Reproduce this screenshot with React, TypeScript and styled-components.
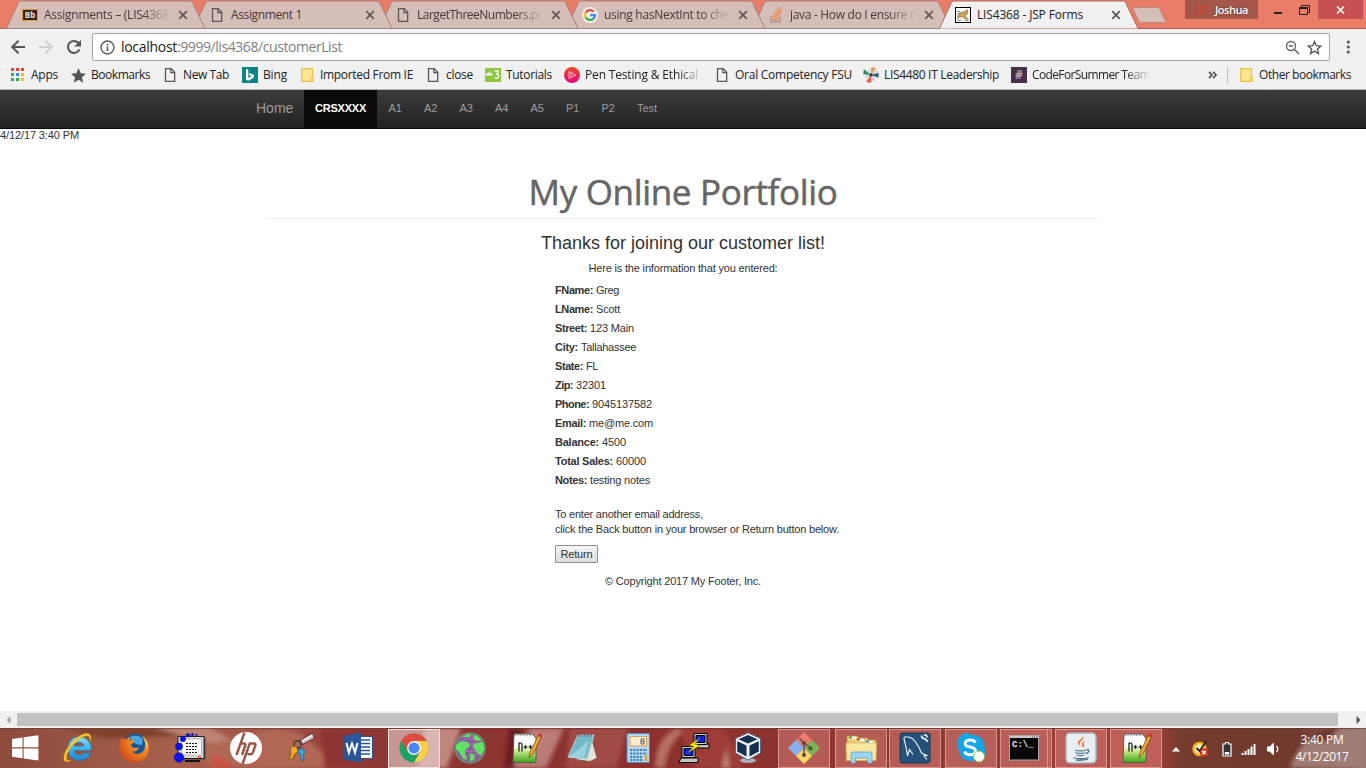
import React, { useLayoutEffect, useRef, useState } from "react";
import styled, { createGlobalStyle } from "styled-components";

const GlobalStyle = createGlobalStyle`
  * { box-sizing: border-box; }
  body { margin: 0; background: #fff; overflow: hidden; }
  svg { display: block; flex: none; }
`;

const UI_FONT = `"Open Sans", "Noto Sans", sans-serif`;
const PAGE_FONT = `"Liberation Sans", Arial, sans-serif`;

/* Text whose tracking is adjusted so that it takes a given width. */
const FitSpan = styled.span`
  display: inline-block;
  white-space: pre;
`;

function Fit({ width, children }: { width: number; children: string }) {
  const ref = useRef<HTMLSpanElement>(null);
  const [spacing, setSpacing] = useState(0);
  useLayoutEffect(() => {
    if (ref.current) {
      const natural = ref.current.getBoundingClientRect().width;
      setSpacing((width - natural) / children.length);
    }
  }, [width, children]);
  return (
    <FitSpan ref={ref} style={{ letterSpacing: spacing }}>
      {children}
    </FitSpan>
  );
}

const Screen = styled.div`
  width: 1366px;
  height: 768px;
  display: flex;
  flex-direction: column;
  overflow: hidden;
  background: #fff;
`;

/* ---------- tab strip ---------- */

const TabStrip = styled.div`
  display: flex;
  position: relative;
  height: 29px;
  flex: none;
  padding-left: 6px;
  background: #e97d67;
  border-bottom: 1px solid #a5605a;
`;

const Tab = styled.div<{ $width: number; $layer: number; $active?: boolean }>`
  position: relative;
  z-index: ${(p) => p.$layer};
  width: ${(p) => p.$width}px;
  flex: none;
  height: 29px;
  display: flex;
  align-items: center;
  padding: 1px 0 0 16px;
  font: 12px ${UI_FONT};
  color: ${(p) => (p.$active ? "#222" : "#4a3638")};
`;

const TabShape = styled.svg`
  position: absolute;
  left: 0;
  top: 0;
`;

const TabIcon = styled.div`
  position: relative;
  width: 16px;
  height: 16px;
  margin-right: 6px;
  display: flex;
  justify-content: center;
  align-items: center;
`;

const TabTitle = styled.div<{ $fade?: boolean }>`
  position: relative;
  width: 125px;
  overflow: hidden;
  line-height: 18px;
  ${(p) => p.$fade && "mask-image: linear-gradient(90deg, #000 98px, transparent 126px);"}
`;

const TabClose = styled.div`
  position: relative;
  margin-left: 9px;
`;

const NewTab = styled.div`
  width: 37px;
  margin-left: 7px;
  padding-top: 6px;
`;

const WindowControls = styled.div`
  display: flex;
  margin-left: auto;
  align-items: flex-start;
  padding-right: 3px;
`;

const UserBadge = styled.div`
  width: 73px;
  height: 19px;
  background: #a55849;
  display: flex;
  align-items: center;
  gap: 8px;
  padding-left: 9px;
  color: #fff;
  font: 600 11px/18px ${UI_FONT};
  text-shadow: 0 0 2px #402420;
`;

const WindowButton = styled.div<{ $width: number; $close?: boolean }>`
  width: ${(p) => p.$width}px;
  height: 19px;
  display: flex;
  align-items: center;
  justify-content: center;
  background: ${(p) => (p.$close ? "#c75050" : "transparent")};
`;

const CloseCross = ({ color }: { color: string }) => (
  <svg width="10" height="10" viewBox="0 0 10 10">
    <path d="M1.2 1.2 8.8 8.8M8.8 1.2 1.2 8.8" stroke={color} strokeWidth="1.7" />
  </svg>
);

const PageIcon = () => (
  <svg width="12" height="14" viewBox="0 0 12 14">
    <path d="M1.500.700h5.700l3.500 3.600v9H1.500z" fill="none" stroke="#5d5456" strokeWidth="1.3" />
    <path d="M6.800.900v3.700h3.800" fill="none" stroke="#5d5456" strokeWidth="1.2" />
  </svg>
);

const SmallLabel = styled.div<{ $bg: string; $color: string; $border?: string; $size: number; $height: number }>`
  width: 16px;
  height: ${(p) => p.$height}px;
  background: ${(p) => p.$bg};
  color: ${(p) => p.$color};
  border: ${(p) => (p.$border ? `1px solid ${p.$border}` : "none")};
  font: bold ${(p) => p.$size}px/1 ${UI_FONT};
  display: flex;
  align-items: center;
  justify-content: center;
`;

const GoogleIcon = () => (
  <svg width="16" height="16" viewBox="0 0 16 16">
    <circle cx="8" cy="8" r="8" fill="#f6eded" />
    <g fill="none" strokeWidth="2.2">
      <path d="M11.6 4.6A5 5 0 0 0 3.6 5.7" stroke="#ea4335" />
      <path d="M3.7 5.5a5 5 0 0 0 0 5" stroke="#fbbc05" />
      <path d="M3.6 10.3a5 5 0 0 0 7.6 1.5" stroke="#34a853" />
      <path d="M11.1 11.9A5 5 0 0 0 13 8.1H8.2" stroke="#4285f4" />
    </g>
  </svg>
);

const StackIcon = () => (
  <svg width="14" height="16" viewBox="0 0 14 16">
    <path d="M1.6 9.5v5h9.6v-5" fill="none" stroke="#a8938d" strokeWidth="1.3" />
    <path d="M3.3 12.4h6.2M3.4 9.7l6.2.9M4 6.9l5.8 2M5.6 4.1l4.9 3.8M8 1.6l3.5 5.2M11.2.4l.9 5.6" stroke="#ee8748" strokeWidth="1.2" />
  </svg>
);

const TomcatIcon = () => (
  <svg width="16" height="16" viewBox="0 0 16 16">
    <rect x=".5" y=".5" width="15" height="15" fill="#fff" stroke="#000" />
    <path d="M8.500 4l.9.9L11 3.500l1.300-.9.700 2.400-.8 2.200-2 .900.8 2 2.600 1.900-3.600-.5-2.300-1.600-2.700.200-2.600 1.500 1-1.700-1.200-.8 1.600-.8L6 6l1.500-.8z" fill="#d0a24c" stroke="#6b5630" strokeWidth=".5" />
    <path d="M2 4.500c2-.8 2.800.2 3.600 1.200M2.500 7l2.500-.6M2.500 13.200h3.500M9.500 13l4 .6" fill="none" stroke="#444" strokeWidth=".8" />
  </svg>
);

const tabs = [
  { title: "Assignments – (LIS4368", w: 125, fade: true, icon: <SmallLabel $bg="#33231f" $color="#f1e3cf" $border="#dd9c3a" $size={8} $height={12}>Bb</SmallLabel> },
  { title: "Assignment 1", w: 71, icon: <PageIcon /> },
  { title: "LargetThreeNumbers.pr", w: 125, fade: true, icon: <PageIcon /> },
  { title: "using hasNextInt to che", w: 125, fade: true, icon: <GoogleIcon /> },
  { title: "java - How do I ensure t", w: 124, fade: true, icon: <StackIcon /> },
  { title: "LIS4368 - JSP Forms", w: 106, active: true, icon: <TomcatIcon /> },
];

/* ---------- toolbar ---------- */

const Toolbar = styled.div`
  display: flex;
  height: 36px;
  flex: none;
  background: #f1f1f1;
  padding: 4px 12px 4px 10px;
  align-items: center;
`;

const NavIcons = styled.div`
  width: 82px;
  display: flex;
  gap: 12px;
`;

const Omnibox = styled.div`
  display: flex;
  flex: 1;
  height: 28px;
  margin-right: 11px;
  border: 1px solid #a6a6a6;
  border-radius: 2px;
  background: #fff;
  align-items: center;
  padding: 0 7px 0 7px;
  font: 14px/20px ${UI_FONT};
  color: #808080;
`;

const Url = styled.div`
  margin: 0 auto 1px 6px;
  display: flex;
`;

const Host = styled.span`
  color: #222;
`;

const OmniIcons = styled.div`
  display: flex;
  gap: 7px;
`;

/* ---------- bookmarks ---------- */

const BookmarksBar = styled.div`
  display: flex;
  height: 25px;
  flex: none;
  background: #f1f1f1;
  border-bottom: 1px solid #b6b4b6;
  padding: 0 15px 4px 10px;
  align-items: center;
  font: 12px/18px ${UI_FONT};
  color: #222;
`;

const Bookmark = styled.div<{ $width: number }>`
  width: ${(p) => p.$width}px;
  display: flex;
  align-items: center;
  flex: none;
`;

const BookmarkIcon = styled.div`
  width: 16px;
  height: 16px;
  margin-right: 5px;
  flex: none;
  display: flex;
  align-items: center;
  justify-content: center;
`;

const BookmarkText = styled.div<{ $fade?: boolean }>`
  overflow: hidden;
  width: ${(p) => (p.$fade ? "118px" : "auto")};
  ${(p) => p.$fade && "mask-image: linear-gradient(90deg, #000 92px, transparent 119px);"}
`;

const Overflow = styled.div`
  margin-left: auto;
  width: 19px;
  display: flex;
`;

const Divider = styled.div`
  width: 1px;
  height: 16px;
  background: #bcbcbc;
  margin-right: 10px;
`;

const FolderIcon = () => (
  <svg width="13" height="14" viewBox="0 0 13 14">
    <path d="M.7.7h10.8v9h.8v3.6H.7z" fill="#ffe58f" stroke="#e6c24c" strokeWidth="1.2" />
    <path d="M10.2 13V9.8h1.6" fill="none" stroke="#e6c24c" />
  </svg>
);

const AppsIcon = () => (
  <svg width="14" height="14" viewBox="0 0 14 14">
    {["#ea4335", "#ea4335", "#ea4335", "#34a853", "#4285f4", "#fbbc05", "#34a853", "#34a853", "#fbbc05"].map((c, i) => (
      <rect key={i} x={(i % 3) * 5} y={Math.floor(i / 3) * 5} width="3" height="3" fill={c} />
    ))}
  </svg>
);

const StarIcon = () => (
  <svg width="15" height="15" viewBox="0 0 24 24">
    <path d="M12 0l3.5 8.2 8.5.8-6.5 5.8 2 8.7L12 18.8l-7.5 4.7 2-8.7L0 9l8.5-.8z" fill="#555" />
  </svg>
);

const BingIcon = () => (
  <svg width="16" height="16" viewBox="0 0 16 16">
    <rect width="16" height="16" fill="#0c8484" />
    <path d="M4 2l2.3.8v8.1l3.1-1.8-1.6-.7-1-2.4 5.2 1.8v2.6l-5.7 3.4L4 12.4z" fill="#fff" />
  </svg>
);

const W3Icon = () => (
  <svg width="16" height="14" viewBox="0 0 16 14">
    <rect width="16" height="14" fill="#8dc63f" />
    <path d="M1 5.500q.7 3 2.200 0 .8 3 2 0 .8 3 2.200.3M9.500 3.200q4-1.400 3.700 1-.3 1.600-2.200 2 3 0 2.700 2.200-.6 2.800-4 1.600" fill="none" stroke="#fff" strokeWidth="1.400" />
  </svg>
);

const PenIcon = () => (
  <svg width="16" height="16" viewBox="0 0 16 16">
    <defs>
      <linearGradient id="pen" x1="0" y1="0" x2="0" y2="1">
        <stop offset="0" stopColor="#ee4a23" />
        <stop offset="1" stopColor="#e5067f" />
      </linearGradient>
    </defs>
    <circle cx="8" cy="8" r="8" fill="url(#pen)" />
    <path d="M5 4.500l6.800 3.500L5 11.500zM7.200 5.800v4.400" fill="none" stroke="#fbd0da" strokeWidth=".9" />
  </svg>
);

const PinwheelIcon = () => (
  <svg width="16" height="16" viewBox="0 0 16 16">
    <path d="M8 8L7.800.8q3-1.300 5 .7z" fill="#ef9a4d" />
    <path d="M8 8l7.300-2.300q1.200 3-.2 5z" fill="#3c6478" />
    <path d="M8 8l.5 7.300q-3.500 1.200-5.300-1z" fill="#e4604c" />
    <path d="M8 8L.5 7.200Q-.3 4 1.500 2.400z" fill="#2e8c6c" />
    <path d="M8 8l4.800-4.500 1.700 1zM8 8l4 4.700-2 1zM8 8l-5 2.500-.8-1.600zM8 8L4.500 3.800 6 2.500z" fill="#8aa9b8" opacity=".6" />
    <circle cx="8" cy="8" r="1.700" fill="#39444a" />
  </svg>
);

const bookmarks = [
  { text: "Apps", w: 27, cell: 60, icon: <AppsIcon /> },
  { text: "Bookmarks", w: 59, cell: 92, icon: <StarIcon /> },
  { text: "New Tab", w: 46, cell: 80, icon: <PageIcon /> },
  { text: "Bing", w: 24, cell: 57, icon: <BingIcon /> },
  { text: "Imported From IE", w: 93, cell: 126, icon: <FolderIcon /> },
  { text: "close", w: 27, cell: 60, icon: <PageIcon /> },
  { text: "Tutorials", w: 46, cell: 79, icon: <W3Icon /> },
  { text: "Pen Testing & Ethical", w: 113, cell: 150, fade: true, icon: <PenIcon /> },
  { text: "Oral Competency FSU", w: 117, cell: 149, icon: <PageIcon /> },
  { text: "LIS4480 IT Leadership", w: 115, cell: 148, icon: <PinwheelIcon /> },
  { text: "CodeForSummer Team", w: 118, cell: 147, fade: true, icon: <SmallLabel $bg="#443147" $color="#b9a4b4" $size={12} $height={16}>#</SmallLabel> },
];

/* ---------- page ---------- */

const Navbar = styled.nav`
  height: 39px;
  flex: none;
  display: flex;
  padding-left: 245px;
  background: linear-gradient(#3c3c3c, #222);
  border-bottom: 1px solid #080808;
  font: 11px ${PAGE_FONT};
  color: #9d9d9d;
`;

const Brand = styled.div`
  width: 59px;
  padding: 0 11px;
  font-size: 14px;
  line-height: 36px;
`;

const NavItem = styled.div<{ $active?: boolean; $width: number }>`
  width: ${(p) => p.$width}px;
  padding-left: ${(p) => (p.$active ? 0 : 1)}px;
  text-align: center;
  line-height: 36px;
  color: ${(p) => (p.$active ? "#fff" : "inherit")};
  font-weight: ${(p) => (p.$active ? "bold" : "normal")};
  background: ${(p) => (p.$active ? "#0b0b0b" : "transparent")};
`;

const Page = styled.main`
  height: 582px;
  flex: none;
  font: 11px/15px ${PAGE_FONT};
  color: #333;
`;

const Timestamp = styled.div`
  height: 15px;
  margin-top: -1px;
`;

const Container = styled.div`
  width: 832px;
  margin: 29px auto 0 267px;
  text-align: center;
`;

const Title = styled.h1`
  height: 47px;
  margin: 0 0 14px;
  border-bottom: 1px solid #eee;
  font: 35px/40px ${UI_FONT};
  color: #666;
  -webkit-text-stroke: 0.5px #666;
`;

const Subtitle = styled.h3`
  margin: 0 0 8px;
  font: 18px/20px ${PAGE_FONT};
`;

const Info = styled.p`
  margin: 0 0 7px;
`;

const Details = styled.div`
  margin-left: 288px;
  text-align: left;
`;

const Field = styled.div`
  height: 19px;
  white-space: nowrap;
`;

const Hint = styled.p`
  margin: 15px 0 8px;
`;

const ReturnButton = styled.button`
  display: flex;
  align-items: center;
  justify-content: center;
  width: 43px;
  height: 18px;
  padding: 0;
  border: 1px solid #8f8f8f;
  border-radius: 1px;
  background: linear-gradient(#f6f6f6, #dcdcdc);
  font: 11px/14px ${PAGE_FONT};
  color: #333;
`;

const Footer = styled.footer`
  margin-top: 11px;
`;

const fields: [string, number, string, number][] = [
  ["FName:", 38, "Greg", 23],
  ["LName:", 38, "Scott", 24],
  ["Street:", 32, "123 Main", 44],
  ["City:", 23, "Tallahassee", 55],
  ["State:", 28, "FL", 12],
  ["Zip:", 18, "32301", 30],
  ["Phone:", 34, "9045137582", 60],
  ["Email:", 31, "me@me.com", 64],
  ["Balance:", 44, "4500", 24],
  ["Total Sales:", 58, "60000", 30],
  ["Notes:", 32, "testing notes", 60],
];

/* ---------- scrollbar ---------- */

const Scrollbar = styled.div`
  height: 17px;
  flex: none;
  display: flex;
  align-items: center;
  background: #f1f1f1;
`;

const ScrollArrow = styled.div<{ $width: number; $inset?: number }>`
  width: ${(p) => p.$width}px;
  padding-left: ${(p) => p.$inset ?? 0}px;
  display: flex;
  justify-content: center;
`;

const Thumb = styled.div`
  width: 1321px;
  flex: none;
  height: 13px;
  background: #c1c1c1;
`;

/* ---------- taskbar ---------- */

const Taskbar = styled.div`
  position: relative;
  height: 40px;
  flex: none;
  display: flex;
  background: #8f4137;
  overflow: hidden;
`;

const Wallpaper = styled.svg`
  position: absolute;
  left: 0;
  top: 0;
`;

const TaskCell = styled.div<{ $width: number }>`
  position: relative;
  width: ${(p) => p.$width}px;
  flex: none;
  display: flex;
  align-items: center;
  justify-content: center;
`;

const TaskButton = styled.div<{ $state?: "open" | "active" }>`
  width: 52px;
  height: 39px;
  flex: none;
  display: flex;
  align-items: center;
  justify-content: center;
  border: 1px solid ${(p) => (p.$state === "active" ? "#f0e2df" : p.$state ? "rgba(240,190,180,.6)" : "transparent")};
  background: ${(p) => (p.$state === "active" ? "rgba(235,215,212,.6)" : p.$state ? "rgba(222,130,122,.5)" : "transparent")};
`;

const StackedButton = styled(TaskButton)`
  width: 48px;
`;

const StackEdge = styled.div`
  width: 4px;
  height: 39px;
  border: 1px solid rgba(240, 190, 180, 0.6);
  border-left: 0;
  background: rgba(222, 130, 122, 0.5);
`;

const Tray = styled.div`
  position: relative;
  flex: 1;
  display: flex;
  align-items: center;
  padding-left: 8px;
`;

const TrayIcon = styled.div<{ $width: number }>`
  width: ${(p) => p.$width}px;
  display: flex;
  justify-content: center;
  padding-top: 2px;
`;

const Clock = styled.div`
  width: 76px;
  text-align: center;
  color: #fff;
  font: 12px/17px ${UI_FONT};
`;

const Ico = ({ children, size = 32 }: { children: React.ReactNode; size?: number }) => (
  <svg width={size} height={size} viewBox="0 0 32 32">
    {children}
  </svg>
);

const MonoGlyph = styled.text`
  font-family: "Liberation Mono", monospace;
`;

const WindowsIcon = () => (
  <Ico>
    <path d="M3 7l10.5-1.5v9.8H3zM14.6 5.3L29.4 3.3v12H14.6zM3 16.4h10.5v9.8L3 24.8zM14.6 16.4h14.8v12l-14.8-2z" fill="#fff" />
  </Ico>
);

const IeIcon = () => (
  <Ico>
    <defs>
      <linearGradient id="ie" x1="0" y1="0" x2="0" y2="1">
        <stop offset="0" stopColor="#8fe0fb" />
        <stop offset=".5" stopColor="#3fb4ee" />
        <stop offset="1" stopColor="#1e86cf" />
      </linearGradient>
    </defs>
    <path d="M17 4.500A12 12 0 1 0 28.700 21h-6.600a6 6 0 0 1-10.300-2.500h17.400A12.500 12.500 0 0 0 17 4.500zM12 14a5.200 5.200 0 0 1 10 0z" fill="url(#ie)" stroke="#2374b4" strokeWidth=".6" />
    <path d="M28.500 9.500q1.700-6.500-2.500-8C19 .3 6.500 11.500 2.700 21.500c-2.500 7.500.8 10 6.500 7C3.800 29.600 3.400 26 5.800 20.300 9.500 12.500 20 3.300 25.400 3.700c2 .3 2.800 2.500 3.100 5.800z" fill="#f8cc2a" stroke="#d79a1b" strokeWidth=".5" />
  </Ico>
);

const FirefoxIcon = () => (
  <Ico>
    <defs>
      <radialGradient id="ff" cx=".8" cy=".2" r=".95">
        <stop offset="0" stopColor="#ffd23a" />
        <stop offset=".4" stopColor="#f38b1f" />
        <stop offset="1" stopColor="#d0461b" />
      </radialGradient>
    </defs>
    <circle cx="17" cy="14" r="12.500" fill="#1b5596" />
    <path d="M12 5q7-4 13 2l-1 6-6-1-4-3z" fill="#4aa6dd" />
    <path d="M3.500 5.500Q6 7 8 7.200q2-2.200 5-2.400-1.300 1.600-1.200 3.200l4 .6q.6 2.400-3 4 .6 2.800 3 3.400 3 .3 5.200-1-2 5.600-7 4.200 2.500 3.800 7.800 2.300 6.200-2.300 5.300-10.500-.5-4-3.500-7.200Q31 8 30.800 17 29.500 29.500 17 30.500 4 30.500 1.500 18 1 10 3.500 5.500z" fill="url(#ff)" />
  </Ico>
);

const MonitorIcon = () => (
  <Ico>
    <path d="M6 5.500h25.500v22H6z" fill="#555" />
    <path d="M4 4.500h26v22H4z" fill="#d9d9d9" stroke="#000" strokeWidth=".8" />
    <rect x="7.500" y="7" width="20" height="16" fill="#fff" stroke="#999" strokeWidth=".6" />
    <path d="M12 11.500h11M12 14.500h12M12 17.500h10M12 20.500h12" stroke="#111" strokeWidth="1.200" strokeDasharray="2 1" />
    <path d="M11 29h15" stroke="#111" strokeWidth="2" />
    <path d="M24 25h3" stroke="#e22" strokeWidth="1.300" />
    <g fill="#0a14f5" stroke="#060a80" strokeWidth=".5">
      <circle cx="5" cy="25.500" r="4.800" />
      <circle cx="5" cy="14.500" r="3.600" />
      <circle cx="9" cy="7" r="2.700" />
      <circle cx="14" cy="3.200" r="1.800" />
      <circle cx="18.500" cy="2.500" r="1.200" />
      <circle cx="22.500" cy="3" r=".8" />
    </g>
  </Ico>
);

const HpIcon = () => (
  <Ico>
    <circle cx="16" cy="16" r="16" fill="#fff" />
    <g fill="none" stroke="#985544" strokeWidth="2.400">
      <path d="M14.500.500L6.500 23M10.500 11.500h3.700q1.700.2 1.100 2L12 23" />
      <path d="M20 10.700L12.500 32M20 11.500h4.300q1.700.2 1 2l-2.400 7q-.7 1.800-2.400 1.800h-3" />
    </g>
  </Ico>
);

const KeysIcon = () => (
  <Ico>
    <path d="M14 8.500L26 1.500l3 4.500-12.500 6.500z" fill="#c9c5cb" stroke="#7c3e40" strokeWidth="1.400" />
    <path d="M16 9l10.500-6" stroke="#f4f4f4" strokeWidth="1.500" />
    <circle cx="11.500" cy="12.500" r="3.600" fill="none" stroke="#333" strokeWidth="1.200" />
    <path d="M4.500 15.500l4-1.500 3 2.500.5 3-3 2-3 6-2.500-.5 1.500-6z" fill="#f2aa24" stroke="#77501b" strokeWidth=".7" />
    <path d="M12.500 17.500l4-1 2.500 3-1.500 3 .5 5.500-2.500.5-1.500-6.500-2-1.500z" fill="#3aa5e0" stroke="#225373" strokeWidth=".7" />
  </Ico>
);

const WordIcon = () => (
  <Ico>
    <path d="M16 4.500h14.500v22H16z" fill="#fff" stroke="#2b579a" strokeWidth="1.200" />
    <path d="M19 8h9M19 11.500h9M19 15h9M19 18.500h9M19 22h9" stroke="#2b579a" strokeWidth="1.500" />
    <path d="M1 4L19 .500v30L1 27.500z" fill="#2b579a" />
    <path d="M4.500 11l2.400 9.500L10 11.500l3 9L15.500 11" fill="none" stroke="#fff" strokeWidth="2" />
  </Ico>
);

const ChromeIcon = () => (
  <Ico>
    <circle cx="16" cy="16" r="14.500" fill="#1ba261" />
    <path d="M16 8.800h12.600A14.500 14.500 0 0 1 16 30.500l6.300-11z" fill="#ffcd46" />
    <path d="M3.400 8.800A14.500 14.500 0 0 1 28.600 8.800H16l-6.300 10.800z" fill="#dd4b3e" />
    <circle cx="16" cy="16" r="7" fill="#f4f4f4" />
    <circle cx="16" cy="16" r="5.500" fill="#4b87f3" />
  </Ico>
);

const GlobeIcon = () => (
  <Ico>
    <circle cx="16" cy="16" r="14.800" fill="#8d5c9d" stroke="#6f8578" strokeWidth="2" />
    <path d="M8 5q5-3.500 9-3l-1 3h-5zM20 3q5 1 7.500 5.500L22 9l-3-3zM2 13l5-4 7 1 2 4-4 3-1 5 2 6-4-1.500-4-7-3-2zM21 11l8-1 1.500 7-3 6-4-1-3-5-2-3zM16 21l5 2-1 5-4 1.500z" fill="#5ee660" />
    <path d="M9 7h14M8 12h18M9 19h16M8 24h15" stroke="#b38dbc" strokeWidth=".7" />
  </Ico>
);

const NotepadPlusIcon = () => (
  <Ico>
    <defs>
      <linearGradient id="npp" x1="0" y1="0" x2="0" y2="1">
        <stop offset=".4" stopColor="#fff" />
        <stop offset=".6" stopColor="#c9e88d" />
        <stop offset="1" stopColor="#3aa413" />
      </linearGradient>
    </defs>
    <path d="M4 2h18l4 4v24.500H3z" fill="url(#npp)" stroke="#555" strokeWidth=".9" />
    <path d="M5 1v3M8 1v3M11 1v3M14 1v3M17 1v3M20 1v3" stroke="#777" />
    <path d="M9 19.500v-9M9 11h1.500q1.500 0 1.500 1.500v7M13.500 15h4M15.500 13v4M18.500 15h4M20.500 13v4" fill="none" stroke="#111" strokeWidth="1.200" />
    <path d="M19 25.500l1-5L28.500 3l3 1.600L23 22z" fill="#f2b02e" stroke="#6e4311" strokeWidth=".8" />
    <path d="M27.800 4L29 1l3 1.600-1.300 2.900z" fill="#c73c2c" />
  </Ico>
);

const NotepadIcon = () => (
  <Ico>
    <path d="M25 4l6 22-7 3.500-14-2z" fill="#e9e1d4" stroke="#665149" strokeWidth=".7" />
    <path d="M12 3h16l-7 24L2 25z" fill="#72b9c9" stroke="#b2d6de" />
    <path d="M3 25L23 8l-5 18z" fill="#b5dfe5" opacity=".6" />
    <path d="M13 1.500v3M16 1.500v3M19 1.500v3M22 1.500v3M25 1.500v3" stroke="#4d4a4a" />
  </Ico>
);

const CalculatorIcon = () => (
  <Ico>
    <rect x="5" y="1.500" width="22.500" height="29" rx="1.500" fill="#b7d8f2" stroke="#4e88b9" />
    <rect x="8" y="4.500" width="16.500" height="9.500" fill="#fdeccb" stroke="#d6a05a" />
    <path d="M19 7h3v5h-3zM19 9.500h3" fill="none" stroke="#575c68" />
    <path d="M8 18h17M8 21.500h17M8 25h13M8 28h13" stroke="#4681b5" strokeWidth="2" strokeDasharray="2.300 1" />
    <path d="M24 23v6" stroke="#f0a021" strokeWidth="2.500" />
  </Ico>
);

const PuttyIcon = () => (
  <Ico>
    <g stroke="#000" strokeWidth="1">
      <path d="M14 12h17v4H12z" fill="#c5c5bb" />
      <path d="M16 1.500h13v11H16z" fill="#d5d4c8" />
      <path d="M18 3.500h9v7h-9z" fill="#0a22ee" />
      <path d="M3 26h17v4.500H1z" fill="#c5c5bb" />
      <path d="M4 14.500h13v11H4z" fill="#d5d4c8" />
      <path d="M6 16.500h9v7H6z" fill="#0a22ee" />
    </g>
    <path d="M23 5l-12 8.500 4.500 1L9 21.500l13-8-5-1.500z" fill="#ffef0a" stroke="#50490a" strokeWidth=".5" />
  </Ico>
);

const VirtualBoxIcon = () => (
  <Ico>
    <ellipse cx="16" cy="28.500" rx="8" ry="2.600" fill="#a9b3bd" />
    <path d="M16 .800l12.500 5.700V21L16 28 3.500 21V6.500z" fill="#eef3f7" stroke="#5e6d7c" />
    <path d="M16 3l9.500 4.200L16 11.500 6.500 7.200zM5.200 9.200l9.300 4.300v11l-9.300-5zM26.800 9.200v10.300l-9.300 5v-11z" fill="#142f50" />
  </Ico>
);

const GitIcon = () => (
  <Ico>
    <path d="M16 0l8 8-8 8-8-8z" fill="#f07a70" />
    <path d="M8 8l8 8-8 8-8-8z" fill="#86aff0" />
    <path d="M24 8l8 8-8 8-8-8z" fill="#78b658" />
    <path d="M16 16l8 8-8 8-8-8z" fill="#f8d66a" />
    <path d="M11 6l5 5v13M16 11l7 5" fill="none" stroke="#6a4f46" strokeWidth="1.500" />
    <circle cx="16" cy="11" r="2" fill="#5b463e" />
    <circle cx="16" cy="23" r="2" fill="#5b463e" />
    <circle cx="22.500" cy="16.500" r="2" fill="#5b463e" />
  </Ico>
);

const ExplorerIcon = () => (
  <Ico>
    <path d="M2 4h10l2 2h8l2 2h7v20H2z" fill="#eacd6e" stroke="#b3913d" strokeWidth=".7" />
    <path d="M4 6h7M12 8h7M21 10h7" stroke="#fff" strokeWidth="2.500" />
    <path d="M4 5.500h3" stroke="#2d9b45" strokeWidth="2" />
    <path d="M12 7.500h3" stroke="#cc3d2e" strokeWidth="2" />
    <path d="M21 9.500h3" stroke="#3080d1" strokeWidth="2" />
    <path d="M1 11h30.500l-.7 17.500H1.500z" fill="#f7e7a0" stroke="#d9b860" strokeWidth=".7" />
    <path d="M6 31V22q0-2 2-2h17q2 0 2 2v9h-4.500v-5h-12v5z" fill="#9bd5f1" stroke="#5ba1cb" strokeWidth=".8" />
  </Ico>
);

const WorkbenchIcon = () => (
  <Ico>
    <rect x="1" y="1" width="30" height="30" rx="2.500" fill="#235177" stroke="#163854" />
    <path d="M8.500 24L7 15 5 7q-.2-2.500 2.500-2.200 6 .2 9.500 5.700 3.500 5.500 5.500 10.500l5.500 2.500-3 .5 3 3.500M8.500 24l2-6.500 3.500 5" fill="none" stroke="#f1f6f9" strokeWidth="1.100" />
    <path d="M22.500 3.500q0 3 3 3.200L29 9.500M25 3q3-.5 3 2.500" fill="none" stroke="#f1f6f9" strokeWidth="1.700" />
  </Ico>
);

const SkypeIcon = () => (
  <Ico>
    <path d="M9 1.500q4-.8 7 1.200 12.500 0 13.500 12 3 12-7 13.500-15 4-18.500-9Q-.5 5 9 1.500z" fill="#12a5e8" />
    <path d="M20.500 10.500Q19 7.800 15 7.900q-4.800.3-4.800 3.500 0 2.600 5 3.600 5.300 1 5.300 4.100-.3 3.600-5 3.700-4.700 0-5.900-3.400" fill="none" stroke="#fff" strokeWidth="3" />
    <circle cx="24" cy="24.500" r="5.500" fill="#fff" stroke="#8fc145" />
  </Ico>
);

const CommandIcon = () => (
  <svg width="30" height="26" viewBox="0 0 30 26">
    <rect x=".5" y=".5" width="29" height="24.500" fill="#080808" stroke="#a8a6a8" />
    <path d="M1 2h28" stroke="#c9c9c9" strokeWidth="2" />
    <path d="M23 2h5" stroke="#555" strokeDasharray="1 1" />
    <MonoGlyph x="3" y="12" fontSize="9" fontWeight="bold" fill="#eee">C:\_</MonoGlyph>
  </svg>
);

const JavaIcon = () => (
  <Ico>
    <rect x="1" y="1" width="30" height="30" rx="4" fill="#e9eef1" stroke="#a9b2bb" strokeWidth="1.500" />
    <path d="M18 4q1.500 2.500-2.500 5.500-2.500 2.500.5 5.500-5-3.500-2-6.500 4-2.500 4-4.500zM20.500 8.500q-4 1.500-3.500 3.800 1.200 1.700.2 3.200 3.300-1.500 1.300-4-.5-1.500 2-3z" fill="#e8702b" />
    <path d="M10 18q5 1.800 11 0M21.500 17.500q3.500.3 2 2.500-1 1.200-3 1.500M10.500 20.500q5 1.800 9 0M11.500 23q4 1.300 7.500 0M8.500 25.500q7.500 2.500 15 0M11 28q6.500.8 12-.8" fill="none" stroke="#4f7890" strokeWidth="1.300" />
  </Ico>
);

const tasks: { w: number; state?: "open" | "active"; icon: React.ReactNode; stacked?: boolean }[] = [
  { w: 50, icon: <WindowsIcon /> },
  { w: 56, icon: <IeIcon /> },
  { w: 56, icon: <FirefoxIcon /> },
  { w: 56, icon: <MonitorIcon /> },
  { w: 56, icon: <HpIcon /> },
  { w: 56, icon: <KeysIcon /> },
  { w: 56, icon: <WordIcon /> },
  { w: 56, state: "active", icon: <ChromeIcon /> },
  { w: 56, icon: <GlobeIcon /> },
  { w: 56, icon: <NotepadPlusIcon /> },
  { w: 56, icon: <NotepadIcon /> },
  { w: 56, icon: <CalculatorIcon /> },
  { w: 56, icon: <PuttyIcon /> },
  { w: 52, icon: <VirtualBoxIcon /> },
  { w: 60, state: "open", icon: <GitIcon /> },
  { w: 53, state: "open", icon: <ExplorerIcon /> },
  { w: 56, state: "open", icon: <WorkbenchIcon /> },
  { w: 55, state: "open", icon: <SkypeIcon /> },
  { w: 55, state: "open", icon: <CommandIcon />, stacked: true },
  { w: 55, state: "open", icon: <JavaIcon /> },
  { w: 55, state: "open", icon: <NotepadPlusIcon /> },
];

const TaskbarBackground = () => (
  <Wallpaper width="1366" height="40" viewBox="0 0 1366 40">
    <defs>
      <linearGradient id="wall" x1="0" x2="1" y1="0" y2="0">
        <stop offset="0" stopColor="#8d4b3c" />
        <stop offset=".12" stopColor="#a5604c" />
        <stop offset=".2" stopColor="#a35245" />
        <stop offset=".27" stopColor="#8e3833" />
        <stop offset=".5" stopColor="#8c302d" />
        <stop offset=".7" stopColor="#8e3a36" />
        <stop offset=".845" stopColor="#a23f37" />
        <stop offset=".865" stopColor="#743c2f" />
        <stop offset=".95" stopColor="#70392d" />
        <stop offset="1" stopColor="#96706a" />
      </linearGradient>
      <filter id="soft" x="-10%" y="-30%" width="120%" height="160%">
        <feGaussianBlur stdDeviation="2.200" />
      </filter>
    </defs>
    <rect width="1366" height="40" fill="url(#wall)" />
    <g filter="url(#soft)">
      <path d="M60 0h130l-15 8-70 2z" fill="#7d402b" />
      <path d="M155 0h55l40 22-45-8z" fill="#bd8476" />
      <path d="M195 20l80-20 25 5 40 35H210z" fill="#b06855" />
      <path d="M215 25l20 15h-25z" fill="#cc5146" />
      <path d="M320 0h50l-15 40h-30z" fill="#8e3634" />
      <path d="M425 0h36l-14 40h-30z" fill="#c08680" />
      <path d="M530 0h34l-18 40h-36z" fill="#bb7c75" />
      <path d="M510 0h12l-8 40h-10z" fill="#651d21" />
      <path d="M570 0h58l-12 40h-50z" fill="#a14b46" />
      <path d="M655 40q0-30 22-40l8 2q-18 15-20 38z" fill="#b66f64" />
      <path d="M680 0h45l20 40h-50z" fill="#9e3e38" />
      <path d="M722 40l4-20 4 20z" fill="#bd8577" />
      <path d="M1290 40q10-30 30-32l20-8h26v40z" fill="#a07c76" />
      <path d="M1310 12q10-12 30-12l-14 14z" fill="#6a382f" />
    </g>
    <path d="M0 .5h1366" stroke="#5b332c" opacity=".5" />
  </Wallpaper>
);

export default function App() {
  return (
    <Screen>
      <GlobalStyle />
      <TabStrip>
        {tabs.map((tab, i) => (
          <Tab key={tab.title} $width={i % 2 ? 186 : 187} $layer={tab.active ? 10 : 6 - i} $active={tab.active}>
            <TabShape width="200" height="29" viewBox="0 0 200 29">
              <path
                d="M.5 28.500L12.500 2.500Q13.200 1 15 1H184.500Q186 1 186.600 2.500L199 28.500z"
                fill={tab.active ? "#f1f1f1" : "#d5bdb8"}
              />
              <path
                d="M.5 28.500L12.500 2.500Q13.200 1 15 1H184.500Q186 1 186.600 2.500L199 28.500"
                fill="none"
                stroke={tab.active ? "#b4695d" : "#aa7d77"}
              />
              {!tab.active && <path d="M0 28.500H200" stroke="#9b8583" />}
            </TabShape>
            <TabIcon>{tab.icon}</TabIcon>
            <TabTitle $fade={tab.fade}>
              <Fit width={tab.w}>{tab.title}</Fit>
            </TabTitle>
            <TabClose>
              <CloseCross color={tab.active ? "#555" : "#65565a"} />
            </TabClose>
          </Tab>
        ))}
        <NewTab>
          <svg width="35" height="18" viewBox="0 0 35 18">
            <path d="M2.500 1.500H25.500Q27 1.500 27.800 3L33.500 15.500Q34 16.500 32 16.500H9Q7.500 16.500 6.700 15L1 3Q.5 1.500 2.500 1.500z" fill="#d5bdb8" stroke="#b88a80" />
          </svg>
        </NewTab>
        <WindowControls>
          <UserBadge>
            <svg width="13" height="12" viewBox="0 0 13 12">
              <path d="M3.500 1.500Q1 3 1 6q0 2.500 2 4M.8 10.300h3V7.800M9.500 10.500Q12 9 12 6 12 3.500 10 2M12.200 1.700h-3v2.500" fill="none" stroke="#d23b2e" strokeWidth="1.200" />
              <path d="M6.500 3v4M6.500 8v1.500" stroke="#d23b2e" strokeWidth="1.400" />
            </svg>
            <Fit width={33}>Joshua</Fit>
          </UserBadge>
          <WindowButton $width={39}>
            <svg width="8" height="10" viewBox="0 0 8 10"><path d="M0 8h8" stroke="#222" strokeWidth="2" /></svg>
          </WindowButton>
          <WindowButton $width={14}>
            <svg width="11" height="10" viewBox="0 0 11 10">
              <path d="M2.500 2V.5h8v7H9" fill="none" stroke="#222" />
              <path d="M.5 3v6.500h8V3z" fill="none" stroke="#222" />
              <path d="M0 3h9" stroke="#222" strokeWidth="2" />
            </svg>
          </WindowButton>
          <WindowButton $width={7} />
          <WindowButton $width={45} $close>
            <svg width="9" height="8" viewBox="0 0 9 8"><path d="M1 .5l7 7M8 .5l-7 7" stroke="#fff" strokeWidth="1.600" /></svg>
          </WindowButton>
        </WindowControls>
      </TabStrip>

      <Toolbar>
        <NavIcons>
          <svg width="16" height="16" viewBox="0 0 16 16"><path d="M15 8H2.500M8.500 1.700L2.200 8l6.300 6.300" fill="none" stroke="#555" strokeWidth="2" /></svg>
          <svg width="16" height="16" viewBox="0 0 16 16"><path d="M1 8h12.500M7.500 1.700L13.800 8l-6.300 6.300" fill="none" stroke="#d0d0d0" strokeWidth="2" /></svg>
          <svg width="16" height="16" viewBox="0 0 16 16">
            <path d="M13.500 10.300A6 6 0 1 1 12.300 3.800L14 5.500" fill="none" stroke="#555" strokeWidth="2" />
            <path d="M15 .8v6.700H8.300z" fill="#555" />
          </svg>
        </NavIcons>
        <Omnibox>
          <svg width="15" height="15" viewBox="0 0 15 15">
            <circle cx="7.500" cy="7.500" r="6.500" fill="none" stroke="#5a5a5a" strokeWidth="1.400" />
            <path d="M7.500 6.500V11M7.500 3.800v1.600" stroke="#5a5a5a" strokeWidth="1.600" />
          </svg>
          <Url>
            <Host><Fit width={56}>localhost</Fit></Host>
            <Fit width={165}>:9999/lis4368/customerList</Fit>
          </Url>
          <OmniIcons>
            <svg width="15" height="15" viewBox="0 0 15 15">
              <circle cx="6" cy="6" r="4.500" fill="none" stroke="#666" strokeWidth="1.400" />
              <path d="M4 6h4M9.500 9.500l4.500 4.500" stroke="#666" strokeWidth="1.600" />
            </svg>
            <svg width="15" height="15" viewBox="0 0 15 15">
              <path d="M7.500 1.500l1.800 4.200 4.500.4-3.400 3 1 4.400-3.900-2.400-3.900 2.400 1-4.400-3.400-3 4.500-.4z" fill="none" stroke="#5a5a5a" strokeWidth="1.400" />
            </svg>
          </OmniIcons>
        </Omnibox>
        <svg width="13" height="14" viewBox="0 0 13 14">
          <g fill="#555"><circle cx="7.300" cy="2" r="1.600" /><circle cx="7.300" cy="7" r="1.600" /><circle cx="7.300" cy="12" r="1.600" /></g>
        </svg>
      </Toolbar>

      <BookmarksBar>
        {bookmarks.map((b) => (
          <Bookmark key={b.text} $width={b.cell}>
            <BookmarkIcon>{b.icon}</BookmarkIcon>
            <BookmarkText $fade={b.fade}><Fit width={b.w}>{b.text}</Fit></BookmarkText>
          </Bookmark>
        ))}
        <Overflow>
          <svg width="10" height="8" viewBox="0 0 10 8"><path d="M1 .8L4 4 1 7.200M5 .8L8 4 5 7.200" fill="none" stroke="#555" strokeWidth="1.700" /></svg>
        </Overflow>
        <Divider />
        <Bookmark $width={113}>
          <BookmarkIcon><FolderIcon /></BookmarkIcon>
          <Fit width={92}>Other bookmarks</Fit>
        </Bookmark>
      </BookmarksBar>

      <Navbar>
        <Brand>Home</Brand>
        <NavItem $active $width={73}><Fit width={51}>CRSXXXX</Fit></NavItem>
        {["A1", "A2", "A3", "A4", "A5", "P1", "P2"].map((label) => (
          <NavItem key={label} $width={35.5}>{label}</NavItem>
        ))}
        <NavItem $width={42}>Test</NavItem>
      </Navbar>

      <Page>
        <Timestamp><Fit width={79}>4/12/17 3:40 PM</Fit></Timestamp>
        <Container>
          <Title><Fit width={309}>My Online Portfolio</Fit></Title>
          <Subtitle><Fit width={284}>Thanks for joining our customer list!</Fit></Subtitle>
          <Info><Fit width={189}>Here is the information that you entered:</Fit></Info>
          <Details>
            {fields.map(([label, lw, value, vw]) => (
              <Field key={label}>
                <b><Fit width={lw}>{label}</Fit></b> <Fit width={vw}>{value}</Fit>
              </Field>
            ))}
            <Hint>
              <Fit width={148}>To enter another email address,</Fit>
              <br />
              <Fit width={284}>click the Back button in your browser or Return button below.</Fit>
            </Hint>
            <ReturnButton><Fit width={32}>Return</Fit></ReturnButton>
          </Details>
          <Footer><Fit width={156}>© Copyright 2017 My Footer, Inc.</Fit></Footer>
        </Container>
      </Page>

      <Scrollbar>
        <ScrollArrow $width={17}>
          <svg width="5" height="8" viewBox="0 0 5 8"><path d="M4.500 0v8L.5 4z" fill="#a3a3a3" /></svg>
        </ScrollArrow>
        <Thumb />
        <ScrollArrow $width={28} $inset={12}>
          <svg width="5" height="8" viewBox="0 0 5 8"><path d="M.5 0v8l4-4z" fill="#505050" /></svg>
        </ScrollArrow>
      </Scrollbar>

      <Taskbar>
        <TaskbarBackground />
        {tasks.map((t, i) => (
          <TaskCell key={i} $width={t.w}>
            {t.stacked ? (
              <>
                <StackedButton $state={t.state}>{t.icon}</StackedButton>
                <StackEdge />
              </>
            ) : (
              <TaskButton $state={t.state}>{t.icon}</TaskButton>
            )}
          </TaskCell>
        ))}
        <Tray>
          <TrayIcon $width={10}><svg width="8" height="5" viewBox="0 0 8 5"><path d="M4 0l4 4.500H0z" fill="#fff" /></svg></TrayIcon>
          <TrayIcon $width={38}>
            <svg width="17" height="16" viewBox="0 0 17 16">
              <circle cx="7.500" cy="8" r="6" fill="#fff3c4" stroke="#f5b51d" strokeWidth="2.500" />
              <path d="M4.500 7l3 3L14 .8" fill="none" stroke="#222" strokeWidth="1.800" />
              <circle cx="12" cy="11.500" r="4.300" fill="#d8321f" />
              <path d="M10.300 9.800l3.400 3.400M13.700 9.800l-3.400 3.400" stroke="#fff" strokeWidth="1.400" />
            </svg>
          </TrayIcon>
          <TrayIcon $width={16}>
            <svg width="10" height="16" viewBox="0 0 10 16">
              <path d="M3.500 1.500h3V3H9v12H1V3h2.500z" fill="#333" stroke="#fff" strokeWidth="1.200" />
              <path d="M2.800 11h4.400v2.600H2.800z" fill="#fff" />
            </svg>
          </TrayIcon>
          <TrayIcon $width={27}>
            <svg width="16" height="12" viewBox="0 0 16 12">
              <path d="M1.500 12v-2M4.500 12V8M7.500 12V6M10.500 12V3.500M13.500 12V1" stroke="#fff" strokeWidth="2" />
            </svg>
          </TrayIcon>
          <TrayIcon $width={22}>
            <svg width="13" height="14" viewBox="0 0 13 14">
              <path d="M0 4.500h2.500L7 .5v13L2.500 9.500H0z" fill="#fff" />
              <path d="M9.500 4q2.500 3 0 6" fill="none" stroke="#fff" strokeWidth="1.300" />
            </svg>
          </TrayIcon>
          <Clock>
            <Fit width={43}>3:40 PM</Fit>
            <br />
            <Fit width={53}>4/12/2017</Fit>
          </Clock>
        </Tray>
      </Taskbar>
    </Screen>
  );
}
